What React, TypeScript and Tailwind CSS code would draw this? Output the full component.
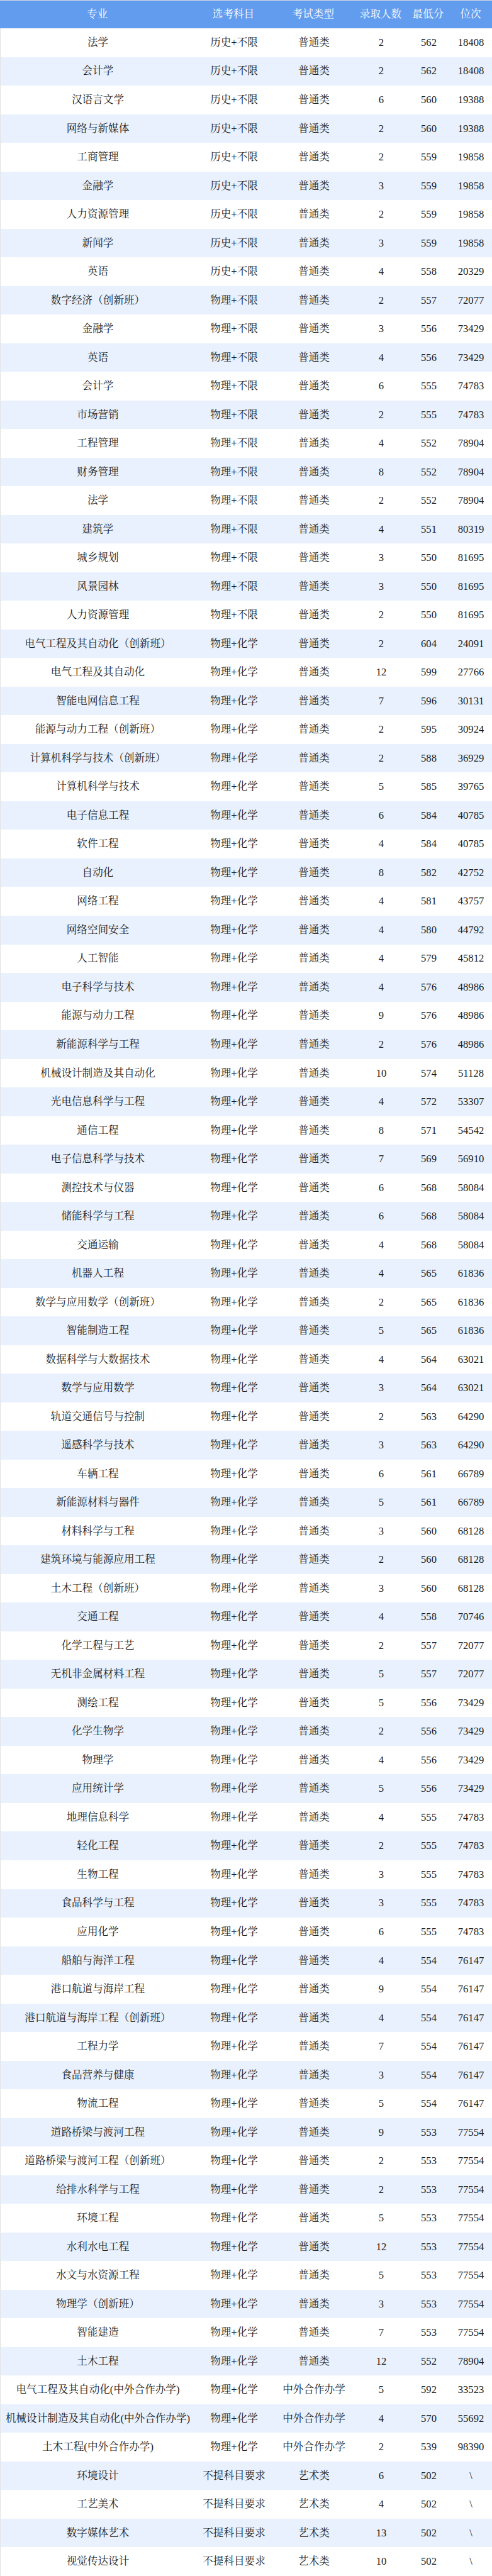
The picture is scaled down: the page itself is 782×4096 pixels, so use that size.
import React from "react";

type Row = [string, string, string, string, string, string];

const H = "历史+不限";
const W = "物理+不限";
const C = "物理+化学";
const P = "普通类";
const Z = "中外合作办学";
const N = "不提科目要求";
const A = "艺术类";

const rows: Row[] = [
  ["法学", H, P, "2", "562", "18408"],
  ["会计学", H, P, "2", "562", "18408"],
  ["汉语言文学", H, P, "6", "560", "19388"],
  ["网络与新媒体", H, P, "2", "560", "19388"],
  ["工商管理", H, P, "2", "559", "19858"],
  ["金融学", H, P, "3", "559", "19858"],
  ["人力资源管理", H, P, "2", "559", "19858"],
  ["新闻学", H, P, "3", "559", "19858"],
  ["英语", H, P, "4", "558", "20329"],
  ["数字经济（创新班）", W, P, "2", "557", "72077"],
  ["金融学", W, P, "3", "556", "73429"],
  ["英语", W, P, "4", "556", "73429"],
  ["会计学", W, P, "6", "555", "74783"],
  ["市场营销", W, P, "2", "555", "74783"],
  ["工程管理", W, P, "4", "552", "78904"],
  ["财务管理", W, P, "8", "552", "78904"],
  ["法学", W, P, "2", "552", "78904"],
  ["建筑学", W, P, "4", "551", "80319"],
  ["城乡规划", W, P, "3", "550", "81695"],
  ["风景园林", W, P, "3", "550", "81695"],
  ["人力资源管理", W, P, "2", "550", "81695"],
  ["电气工程及其自动化（创新班）", C, P, "2", "604", "24091"],
  ["电气工程及其自动化", C, P, "12", "599", "27766"],
  ["智能电网信息工程", C, P, "7", "596", "30131"],
  ["能源与动力工程（创新班）", C, P, "2", "595", "30924"],
  ["计算机科学与技术（创新班）", C, P, "2", "588", "36929"],
  ["计算机科学与技术", C, P, "5", "585", "39765"],
  ["电子信息工程", C, P, "6", "584", "40785"],
  ["软件工程", C, P, "4", "584", "40785"],
  ["自动化", C, P, "8", "582", "42752"],
  ["网络工程", C, P, "4", "581", "43757"],
  ["网络空间安全", C, P, "4", "580", "44792"],
  ["人工智能", C, P, "4", "579", "45812"],
  ["电子科学与技术", C, P, "4", "576", "48986"],
  ["能源与动力工程", C, P, "9", "576", "48986"],
  ["新能源科学与工程", C, P, "2", "576", "48986"],
  ["机械设计制造及其自动化", C, P, "10", "574", "51128"],
  ["光电信息科学与工程", C, P, "4", "572", "53307"],
  ["通信工程", C, P, "8", "571", "54542"],
  ["电子信息科学与技术", C, P, "7", "569", "56910"],
  ["测控技术与仪器", C, P, "6", "568", "58084"],
  ["储能科学与工程", C, P, "6", "568", "58084"],
  ["交通运输", C, P, "4", "568", "58084"],
  ["机器人工程", C, P, "4", "565", "61836"],
  ["数学与应用数学（创新班）", C, P, "2", "565", "61836"],
  ["智能制造工程", C, P, "5", "565", "61836"],
  ["数据科学与大数据技术", C, P, "4", "564", "63021"],
  ["数学与应用数学", C, P, "3", "564", "63021"],
  ["轨道交通信号与控制", C, P, "2", "563", "64290"],
  ["遥感科学与技术", C, P, "3", "563", "64290"],
  ["车辆工程", C, P, "6", "561", "66789"],
  ["新能源材料与器件", C, P, "5", "561", "66789"],
  ["材料科学与工程", C, P, "3", "560", "68128"],
  ["建筑环境与能源应用工程", C, P, "2", "560", "68128"],
  ["土木工程（创新班）", C, P, "3", "560", "68128"],
  ["交通工程", C, P, "4", "558", "70746"],
  ["化学工程与工艺", C, P, "2", "557", "72077"],
  ["无机非金属材料工程", C, P, "5", "557", "72077"],
  ["测绘工程", C, P, "5", "556", "73429"],
  ["化学生物学", C, P, "2", "556", "73429"],
  ["物理学", C, P, "4", "556", "73429"],
  ["应用统计学", C, P, "5", "556", "73429"],
  ["地理信息科学", C, P, "4", "555", "74783"],
  ["轻化工程", C, P, "2", "555", "74783"],
  ["生物工程", C, P, "3", "555", "74783"],
  ["食品科学与工程", C, P, "3", "555", "74783"],
  ["应用化学", C, P, "6", "555", "74783"],
  ["船舶与海洋工程", C, P, "4", "554", "76147"],
  ["港口航道与海岸工程", C, P, "9", "554", "76147"],
  ["港口航道与海岸工程（创新班）", C, P, "4", "554", "76147"],
  ["工程力学", C, P, "7", "554", "76147"],
  ["食品营养与健康", C, P, "3", "554", "76147"],
  ["物流工程", C, P, "5", "554", "76147"],
  ["道路桥梁与渡河工程", C, P, "9", "553", "77554"],
  ["道路桥梁与渡河工程（创新班）", C, P, "2", "553", "77554"],
  ["给排水科学与工程", C, P, "2", "553", "77554"],
  ["环境工程", C, P, "5", "553", "77554"],
  ["水利水电工程", C, P, "12", "553", "77554"],
  ["水文与水资源工程", C, P, "5", "553", "77554"],
  ["物理学（创新班）", C, P, "3", "553", "77554"],
  ["智能建造", C, P, "7", "553", "77554"],
  ["土木工程", C, P, "12", "552", "78904"],
  ["电气工程及其自动化(中外合作办学)", C, Z, "5", "592", "33523"],
  ["机械设计制造及其自动化(中外合作办学)", C, Z, "4", "570", "55692"],
  ["土木工程(中外合作办学)", C, Z, "2", "539", "98390"],
  ["环境设计", N, A, "6", "502", "\\"],
  ["工艺美术", N, A, "4", "502", "\\"],
  ["数字媒体艺术", N, A, "13", "502", "\\"],
  ["视觉传达设计", N, A, "10", "502", "\\"],
];

const headers = ["专业", "选考科目", "考试类型", "录取人数", "最低分", "位次"];

const grid = "grid grid-cols-[309px_124px_130px_84px_67px_1fr]";

export default function App() {
  return (
    <div className="w-[782px] bg-white font-['Liberation_Serif','Noto_Serif_CJK_SC','Noto_Sans_CJK_SC',serif] text-[16.6px] leading-none">
      <div className={`${grid} h-[45px] bg-[#629cee] border-t border-[#cfd8e3] text-white`}>
        {headers.map((h) => (
          <div key={h} className="flex items-center justify-center whitespace-nowrap">
            {h}
          </div>
        ))}
      </div>
      <div className="border-l border-[#e3e3e3]">
        {rows.map((r, i) => (
          <div
            key={i}
            className={`${grid} h-[45.52px] text-[#1a1a1a] ${i % 2 === 1 ? "bg-[#e8f1fd]" : "bg-white"}`}
          >
            {r.map((c, j) => (
              <div key={j} className="flex items-center justify-center whitespace-nowrap pt-[1px]">
                {c}
              </div>
            ))}
          </div>
        ))}
      </div>
    </div>
  );
}
